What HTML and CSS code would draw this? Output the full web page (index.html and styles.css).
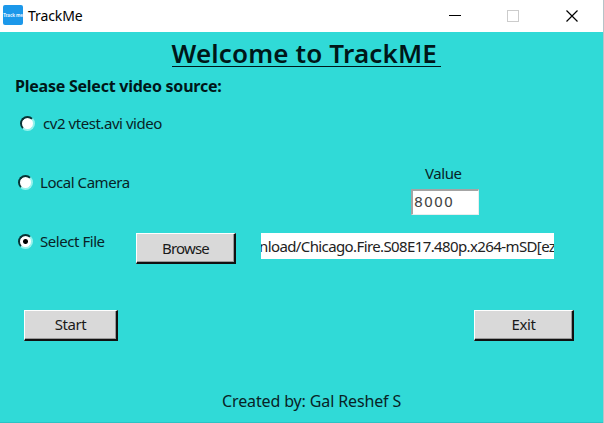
FILE: index.html
```html
<!DOCTYPE html>
<html lang="en">
<head>
<meta charset="utf-8">
<title>TrackMe</title>
<link rel="stylesheet" href="styles.css">
</head>
<body>
<div class="window">
  <header class="titlebar">
    <span class="app-icon">Track me</span>
    <span class="app-name">TrackMe</span>
    <svg class="controls" width="160" height="32" viewBox="0 0 160 32" fill="none" shape-rendering="crispEdges">
      <path d="M5 15.500h12" stroke="#000"/>
      <rect x="63.500" y="10.500" width="11" height="11" stroke="#ccc"/>
      <path d="M122.500 10.500l11 11M133.500 10.500l-11 11" stroke="#000" stroke-width="1.200" shape-rendering="auto"/>
    </svg>
  </header>
  <main class="panel">
    <h1 class="title"><span>Welcome to TrackME</span></h1>
    <h2 class="prompt"><span>Please Select video source:</span></h2>
    <div class="row row-test">
      <i class="radio"></i><span class="label vtest">cv2 vtest.avi video</span>
    </div>
    <div class="row row-camera">
      <div class="option"><i class="radio"></i><span class="label camera">Local Camera</span></div>
      <div class="value">
        <span class="label value-label">Value</span>
        <div class="value-input"><span>8000</span></div>
      </div>
    </div>
    <div class="row row-file">
      <div class="option"><i class="radio checked"></i><span class="label file">Select File</span></div>
      <div class="button browse"><span>Browse</span></div>
      <div class="path"><span>nload/Chicago.Fire.S08E17.480p.x264-mSD[ez</span></div>
    </div>
    <div class="row row-actions">
      <div class="button start"><span>Start</span></div>
      <div class="button exit"><span>Exit</span></div>
    </div>
    <footer class="credit"><span>Created by: Gal Reshef S</span></footer>
  </main>
</div>
</body>
</html>
```
FILE: styles.css
```css
* { box-sizing: border-box; }
body {
  margin: 0;
  width: 604px;
  height: 423px;
  overflow: hidden;
  font-family: "Noto Sans", "Open Sans", sans-serif;
  font-size: 15px;
  line-height: 20px;
  letter-spacing: -0.45px;
  color: #082326;
}
span { white-space: nowrap; }
.window { height: 423px; border-right: 1px solid #b5c3c8; background: #30dad7; }
.titlebar { display: flex; height: 32px; background: #fff; color: #000; }
.app-icon {
  width: 20px; height: 20px; margin: 5px 5px 0 3px;
  border-radius: 2px; background: #1c98ea; color: #e8f5ff;
  font-size: 4.5px; font-weight: 700; line-height: 20px; letter-spacing: -0.1px; text-align: center;
}
.app-name { margin-top: 6px; font-size: 14px; letter-spacing: -0.1px; }
.controls { margin-left: auto; margin-right: -1px; }
.panel { height: 391px; border-bottom: 1px solid #29c4c5; }
.title {
  display: flex; justify-content: center; height: 42px; margin: 0; padding: 5px 0 0 9px;
  font-size: 26px; line-height: 33px; font-weight: 600; letter-spacing: 0.15px; color: #001719;
}
.title span { width: 269px; height: 30px; border-bottom: 1px solid #001719; }
.prompt { height: 24px; margin: 0; padding: 2px 0 0 15px; font-size: 16px; line-height: 20px; letter-spacing: -0.24px; font-weight: 700; color: #001719; }
.row { display: flex; }
.option { display: flex; }
.row-test { height: 65px; padding: 15px 0 0 20px; }
.row-test .label { margin-left: 8px; }
.row-camera { height: 70px; padding-left: 18px; }
.row-camera .option { width: 393px; padding-top: 9px; }
.option .label { margin-left: 7px; }
.value-label { display: block; margin-left: 14px; }
.value-input {
  width: 68px; height: 26px; margin-top: 6px; padding: 2px 0 0 1px;
  border: 1px solid #e7eeee; border-top: 2px solid #a4a4a4; border-left: 2px solid #a4a4a4;
  background: #fff; color: #444; font-family: "DejaVu Sans", sans-serif; font-size: 14px; line-height: 19px; letter-spacing: 1.1px;
}
.row-file { height: 77px; padding-left: 18px; }
.row-file .option { width: 118px; margin-top: -2px; }
.radio {
  width: 15px; height: 15px; margin-top: 3px; border-radius: 50%;
  border: 2px solid; border-color: #073335 #96f3ed #96f3ed #073335; background: #fff;
}
.checked { background: radial-gradient(circle, #000 0 2px, #fff 3px); }
.button {
  height: 31px; display: flex; justify-content: center; padding-top: 4px;
  border: 1px solid #fff; border-right: 2px solid #111; border-bottom: 2px solid #111;
  background: #d9d9d9; box-shadow: inset -1px -1px #999; color: #1a1a1a;
}
.browse { width: 100px; letter-spacing: -0.8px; }
.path { width: 293px; height: 26px; margin: 0 0 0 25px; padding-top: 3px; overflow: hidden; background: #fff; color: #222; }
.path span { display: block; margin-left: -2px; letter-spacing: -0.61px; }
.row-actions { height: 81px; padding-left: 24px; }
.row-actions .button { padding-top: 3px; }
.start { width: 94px; }
.exit { width: 100px; margin-left: 356px; }
.credit { padding-left: 222px; font-size: 16px; letter-spacing: -0.13px; }
```
